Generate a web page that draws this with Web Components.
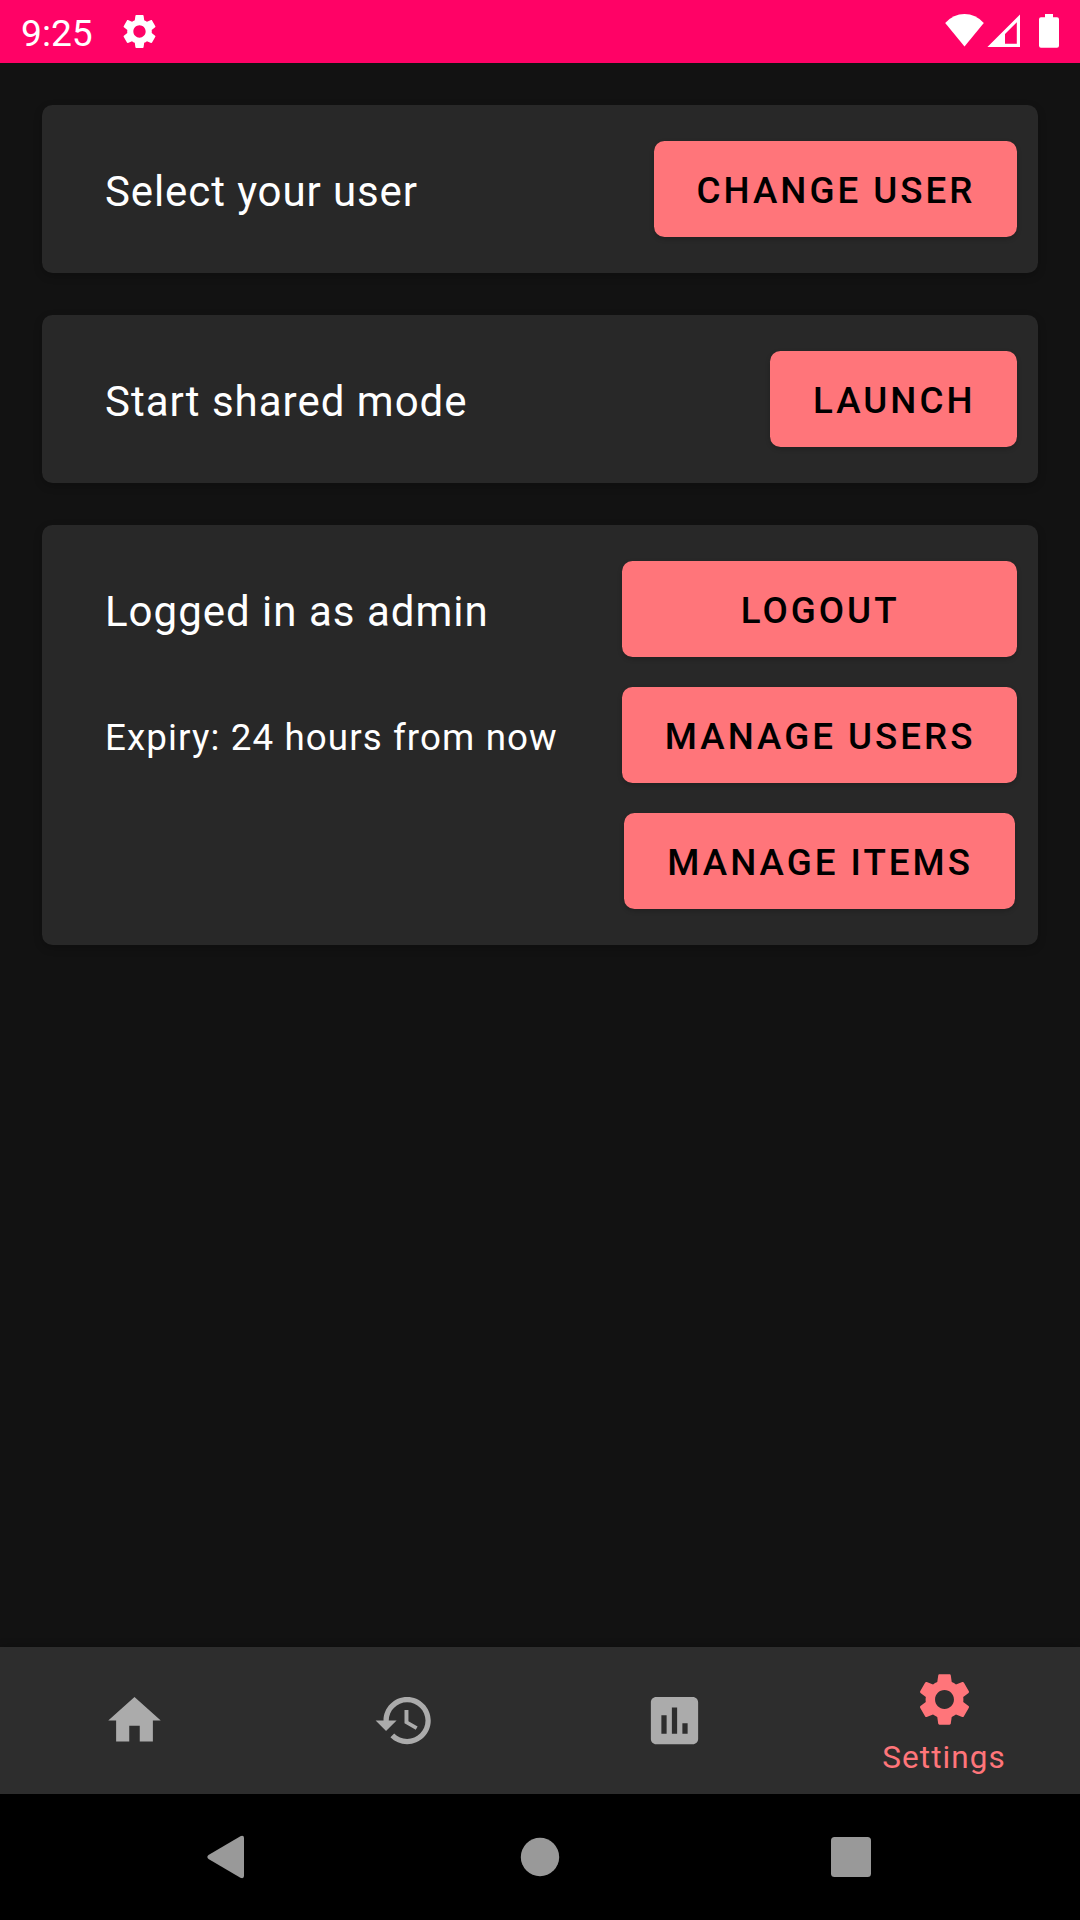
<!DOCTYPE html>
<html lang="en">
<head>
<meta charset="utf-8">
<title>Settings</title>
<style>
  html, body { margin: 0; height: 100%; background: #121212; }
  body { font-family: Roboto, "Noto Sans", sans-serif; color: #fff; overflow: hidden; }
</style>
</head>
<body>
<settings-app></settings-app>
<script>
const define = (name, css, html) => customElements.define(name, class extends HTMLElement {
  constructor() {
    super();
    this.attachShadow({ mode: 'open' }).innerHTML = `<style>${css}</style>${html}`;
  }
});

const GEAR = 'M19.14 12.94c.04-.3.06-.61.06-.94 0-.32-.02-.64-.07-.94l2.03-1.58c.18-.14.23-.41.12-.61l-1.92-3.32c-.12-.22-.37-.29-.59-.22l-2.39.96c-.5-.38-1.03-.7-1.62-.94l-.36-2.54c-.04-.24-.24-.41-.48-.41h-3.84c-.24 0-.43.17-.47.41l-.36 2.54c-.59.24-1.13.57-1.62.94l-2.39-.96c-.22-.08-.47 0-.59.22L2.74 8.87c-.12.21-.08.47.12.61l2.03 1.58c-.05.3-.09.63-.09.94s.02.64.07.94l-2.03 1.58c-.18.14-.23.41-.12.61l1.92 3.32c.12.22.37.29.59.22l2.39-.96c.5.38 1.03.7 1.62.94l.36 2.54c.05.24.24.41.48.41h3.84c.24 0 .44-.17.47-.41l.36-2.54c.59-.24 1.13-.56 1.62-.94l2.39.96c.22.08.47 0 .59-.22l1.92-3.32c.12-.22.07-.47-.12-.61l-2.01-1.58zM12 15.6c-1.98 0-3.6-1.62-3.6-3.6s1.62-3.6 3.6-3.6 3.6 1.62 3.6 3.6-1.62 3.6-3.6 3.6z';
const ICONS = {
  settings: GEAR,
  home: 'M10 20v-6h4v6h5v-8h3L12 3 2 12h3v8z',
  history: 'M13 3c-4.97 0-9 4.03-9 9H1l3.89 3.89.07.14L9 12H6c0-3.87 3.13-7 7-7s7 3.13 7 7-3.13 7-7 7c-1.93 0-3.68-.79-4.94-2.06l-1.42 1.42C8.27 19.99 10.51 21 13 21c4.97 0 9-4.03 9-9s-4.03-9-9-9zm-1 5v5l4.28 2.54.72-1.21-3.5-2.08V8H12z',
  chart: 'M19 3H5c-1.1 0-2 .9-2 2v14c0 1.1.9 2 2 2h14c1.1 0 2-.9 2-2V5c0-1.1-.9-2-2-2zM9 17H7v-7h2v7zm4 0h-2V7h2v10zm4 0h-2v-4h2v4z'
};

customElements.define('app-icon', class extends HTMLElement {
  constructor() {
    super();
    this.attachShadow({ mode: 'open' });
  }
  connectedCallback() {
    this.shadowRoot.innerHTML = `<style>
      :host { display: block; width: var(--size, 63px); height: var(--size, 63px); flex: none; }
      svg { display: block; width: 100%; height: 100%; fill: currentColor; }
    </style><svg viewBox="0 0 24 24"><path d="${ICONS[this.getAttribute('name')]}"/></svg>`;
  }
});

define('status-bar', `
  :host { display: flex; align-items: center; height: 63px; box-sizing: border-box; padding: 0 21px; background: #ff0266; color: #fff; }
  time { font-size: 37.2px; line-height: 43px; padding-top: 3px; flex: none; width: 98px; }
  app-icon { --size: 41px; }
  .signals { margin-left: auto; display: block; }
`, `
  <time>9:25</time><app-icon name="settings"></app-icon>
  <svg class="signals" width="114" height="63" viewBox="945 0 114 63" fill="#fff">
    <path d="M964.5 46.6 945.2 23q8.2-8.9 19.3-8.9T983.8 23z"/>
    <path fill-rule="evenodd" d="M1020 14.4V47h-32.6zM1016.8 22.3 1005 34v9.8h11.8z"/>
    <path d="M1045 14h8v3.3h4q2 0 2 2v26.4q0 2-2 2h-16q-2 0-2-2V19.3q0-2 2-2h4z"/>
  </svg>`);

define('setting-card', `
  :host { display: flex; justify-content: space-between; box-sizing: border-box; padding: 21px 21px 21px 63px; background: #282828; border-radius: 10.5px; box-shadow: 0 3px 8px rgba(0,0,0,.22); }
  .labels, .actions { display: flex; flex-direction: column; }
  .actions { align-items: center; }
`, `<div class="labels"><slot></slot></div><div class="actions"><slot name="action"></slot></div>`);

define('card-label', `
  :host { display: flex; align-items: center; height: 126px; box-sizing: border-box; padding-top: 5px; font-size: 42px; letter-spacing: 1px; white-space: nowrap; line-height: 50px; }
  :host([tight]) { letter-spacing: .9px; }
  :host([small]) { font-size: 36.75px; letter-spacing: 1.1px; }
`, `<slot></slot>`);

define('action-button', `
  :host { display: flex; height: 126px; align-items: center; }
  :host([wide]) { align-self: stretch; }
  button { flex: 1; height: 96px; margin: 0; padding: 3px 41.5px 0 43px; border: 0; border-radius: 10.5px; background: #ff757a; color: #000; font: 470 36.75px/44px Roboto, "Noto Sans", sans-serif; letter-spacing: 3px; white-space: nowrap; box-shadow: 0 2px 5px rgba(0,0,0,.2); }
`, `<button><slot></slot></button>`);

define('nav-item', `
  :host { width: 270px; flex: none; display: flex; flex-direction: column; align-items: center; justify-content: center; color: #ababab; }
  :host([active]) { color: #ff757a; justify-content: flex-start; padding-top: 21px; }
  span { font-size: 31.5px; line-height: 37px; letter-spacing: 1.05px; }
  :host([active]) span { padding-top: 8px; }
`, `<slot name="icon"></slot><span><slot></slot></span>`);

define('bottom-nav', `
  :host { display: flex; justify-content: center; height: 147px; margin-top: 0; padding-right: 2px; background: #2d2d2d; box-shadow: 0 0 8px rgba(0,0,0,.3); }
`, `<slot></slot>`);

define('system-nav', `
  :host { display: flex; height: 126px; align-items: center; justify-content: space-between; padding: 0 209px 0 207px; background: #000; color: #999; }
  svg { display: block; fill: #999; }
`, `
  <svg width="40" height="44" viewBox="0 0 40 44"><path d="M1.5 20 33.4 1.2Q37 0 37 3V41Q37 44 33.4 42.8L1.5 24Q-.8 22 1.5 20z"/></svg>
  <svg width="42" height="40" viewBox="0 0 42 40"><circle cx="22" cy="20" r="19.2"/></svg>
  <svg width="40" height="40" viewBox="0 0 40 40"><rect width="40" height="40" rx="3.5"/></svg>`);

define('settings-app', `
  :host { display: flex; flex-direction: column; width: 1080px; height: 1920px; background: #121212; }
  main { flex: 1; display: flex; flex-direction: column; gap: 42px; padding: 42px; }
`, `
  <status-bar></status-bar>
  <main>
    <setting-card>
      <card-label tight>Select your user</card-label>
      <action-button slot="action">CHANGE USER</action-button>
    </setting-card>
    <setting-card>
      <card-label>Start shared mode</card-label>
      <action-button slot="action">LAUNCH</action-button>
    </setting-card>
    <setting-card>
      <card-label>Logged in as admin</card-label>
      <card-label small>Expiry: 24 hours from now</card-label>
      <action-button slot="action" wide>LOGOUT</action-button>
      <action-button slot="action" wide>MANAGE USERS</action-button>
      <action-button slot="action">MANAGE ITEMS</action-button>
    </setting-card>
  </main>
  <bottom-nav>
    <nav-item><app-icon slot="icon" name="home"></app-icon></nav-item>
    <nav-item><app-icon slot="icon" name="history"></app-icon></nav-item>
    <nav-item><app-icon slot="icon" name="chart"></app-icon></nav-item>
    <nav-item active><app-icon slot="icon" name="settings"></app-icon>Settings</nav-item>
  </bottom-nav>
  <system-nav></system-nav>`);
</script>
</body>
</html>
